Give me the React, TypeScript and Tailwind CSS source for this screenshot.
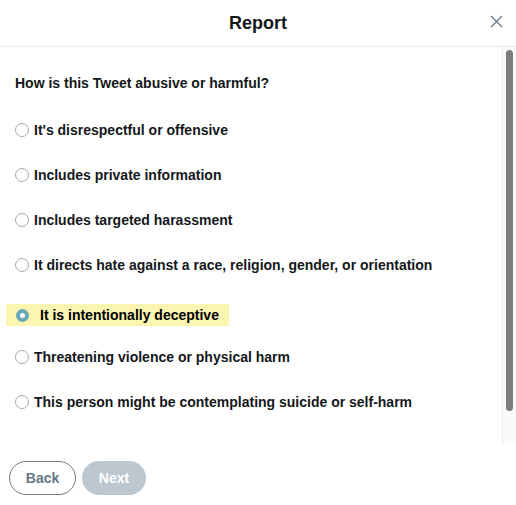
import React from "react";

const options = [
  { label: "It's disrespectful or offensive", mt: "mt-[27px]" },
  { label: "Includes private information", mt: "mt-[23px]" },
  { label: "Includes targeted harassment", mt: "mt-[23px]" },
  { label: "It directs hate against a race, religion, gender, or orientation", mt: "mt-[23px]" },
  { label: "It is intentionally deceptive", mt: "mt-[28px]", selected: true },
  { label: "Threatening violence or physical harm", mt: "mt-[20px]" },
  { label: "This person might be contemplating suicide or self-harm", mt: "mt-[23px]" },
];

function Radio({ checked }: { checked?: boolean }) {
  if (checked) {
    return (
      <span className="w-[13px] h-[13px] rounded-full bg-[#6aa8b6] flex items-center justify-center shrink-0">
        <span className="w-[5px] h-[5px] rounded-full bg-white" />
      </span>
    );
  }
  return <span className="w-[14px] h-[14px] rounded-full border border-[#a8a8a8] bg-white shrink-0" />;
}

export default function App() {
  return (
    <div className="w-[516px] h-[505px] bg-white flex flex-col font-['Liberation_Sans',Arial,sans-serif] text-[#14171a]">
      <div className="h-[47px] border-b border-[#e6ecf0] flex items-center justify-center relative shrink-0">
        <h1 className="text-[18px] font-bold leading-none -mt-[1px]">Report</h1>
        <button className="absolute right-[13px] top-[14px] w-[14px] h-[14px] flex items-center justify-center">
          <svg width="13" height="13" viewBox="0 0 13 13" fill="none" stroke="#657786" strokeWidth="1.3">
            <path d="M1 1L12 12M12 1L1 12" />
          </svg>
        </button>
      </div>

      <div className="h-[396px] flex shrink-0">
        <div className="flex-1 flex flex-col pt-[27px]">
          <p className="pl-[15px] text-[14px] font-bold leading-[18px] h-[18px]">How is this Tweet abusive or harmful?</p>
          {options.map((o) =>
            o.selected ? (
              <div
                key={o.label}
                className={`${o.mt} ml-[6px] w-[223px] h-[22px] bg-[#fbf5b2] flex items-center pl-[10px] gap-[11px]`}
              >
                <Radio checked />
                <span className="text-[14px] font-bold leading-none text-black">{o.label}</span>
              </div>
            ) : (
              <div key={o.label} className={`${o.mt} h-[22px] flex items-center pl-[15px] gap-[5px]`}>
                <Radio />
                <span className="text-[14px] font-bold leading-none">{o.label}</span>
              </div>
            )
          )}
        </div>
        <div className="w-[14px] bg-[#fafafa] border-l border-[#ebebeb] pt-[3px] pl-[3px]">
          <div className="w-[7px] h-[361px] rounded-full bg-[#7d7d7d]" />
        </div>
      </div>

      <div className="flex gap-[6px] pl-[9px] pt-[18px]">
        <button className="w-[67px] h-[34px] rounded-full border border-[#6e7a85] text-[#657786] text-[14px] font-bold">
          Back
        </button>
        <button className="w-[64px] h-[34px] rounded-full bg-[#bcc7d0] text-white text-[14px] font-bold">
          Next
        </button>
      </div>
    </div>
  );
}
